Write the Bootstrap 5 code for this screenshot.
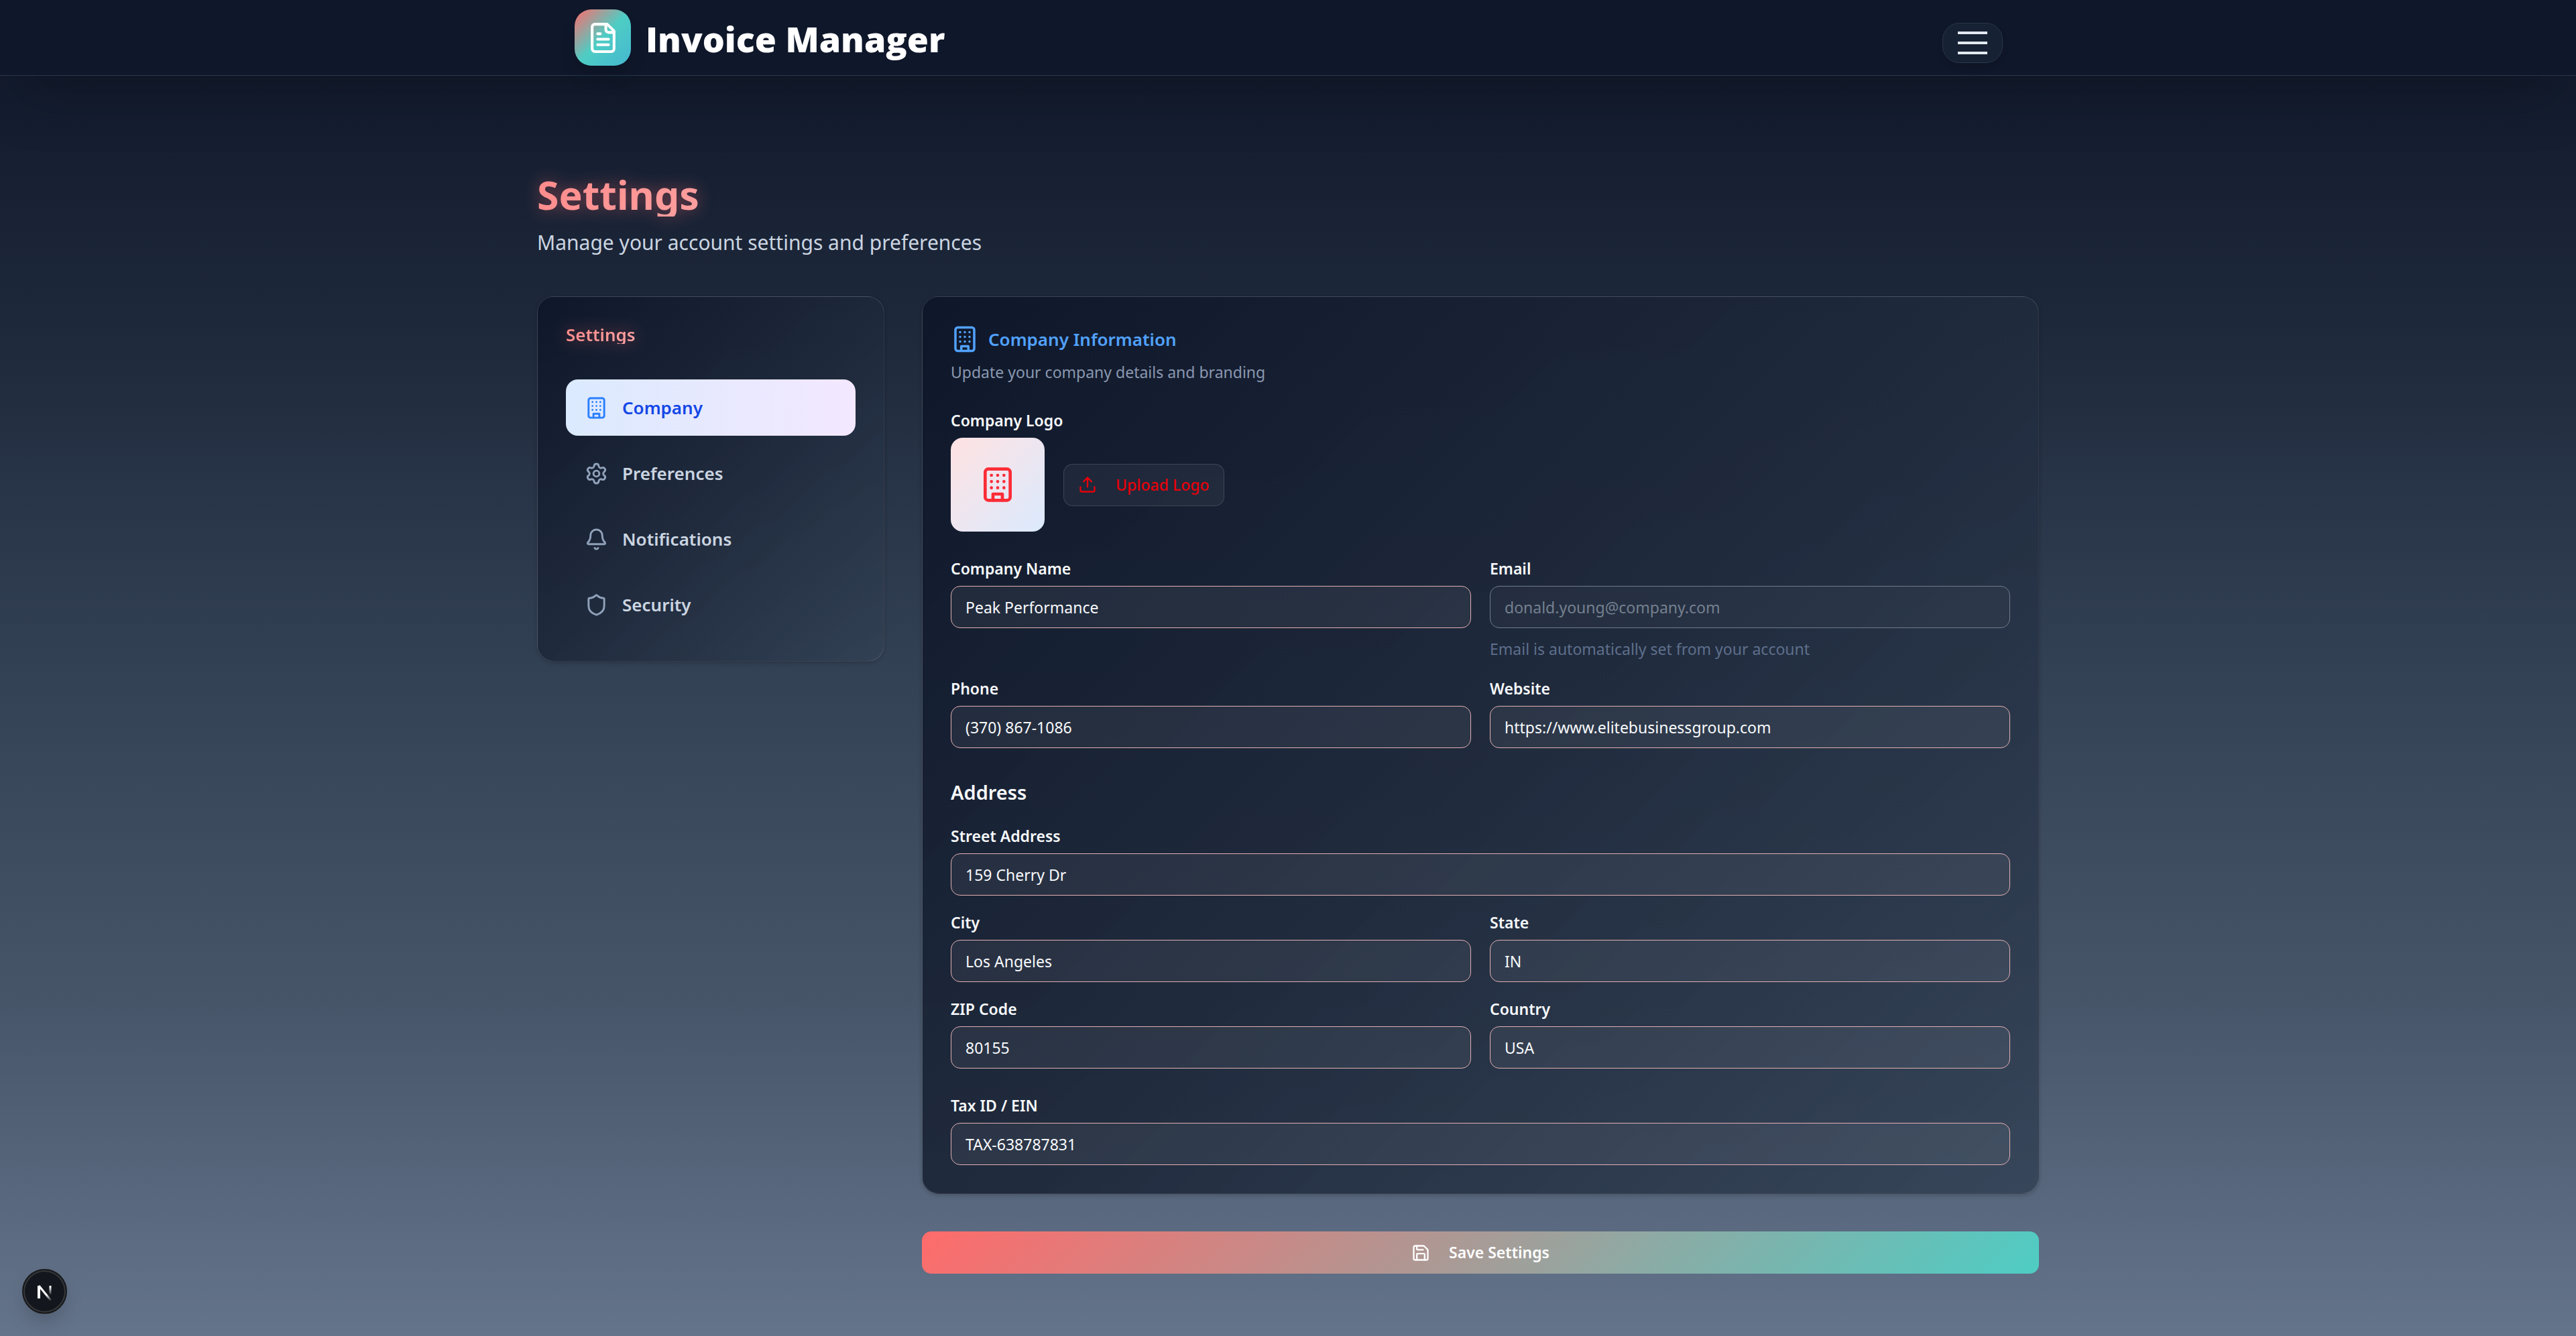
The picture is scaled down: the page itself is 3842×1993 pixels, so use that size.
<!DOCTYPE html>
<html lang="en">
<head>
<meta charset="utf-8">
<meta name="viewport" content="width=device-width, initial-scale=1">
<title>Invoice Manager – Settings</title>
<link href="https://cdn.jsdelivr.net/npm/bootstrap@5.3.0/dist/css/bootstrap.min.css" rel="stylesheet">
<style>
  :root { --page: 2240px; }
  body {
    min-height: 100vh;
    font-family: "Noto Sans", "Open Sans", sans-serif;
    font-size: 23px;
    line-height: 35px;
    color: #f8fafc;
    background: linear-gradient(180deg, #0f172a 0%, #1e293b 25%, #334155 50%, #475569 75%, #64748b 100%) no-repeat;
  }
  svg { display: block; flex: none; fill: none; stroke: currentColor; stroke-width: 2; stroke-linecap: round; stroke-linejoin: round; }
  .ico-sm { width: 28px; height: 28px; }
  .ico-md { width: 35px; height: 35px; }
  .ico-lg { width: 42px; height: 42px; }
  .ico-doc { width: 49px; height: 49px; }
  .ico-xl { width: 56px; height: 56px; }

  .topbar {
    height: 113px;
    background: #0f172a;
    border-bottom: 1px solid #28374f;
    box-shadow: 0 44px 88px -21px rgba(0, 0, 0, .25);
  }
  .page-wrap { width: 100%; max-width: var(--page); margin: 0 auto; }
  .topbar .page-wrap { padding: 0 54px 0 56px; }
  .brand { gap: 22px; color: #fff; font-family: "Open Sans", "Noto Sans", sans-serif; font-size: 52px; font-weight: 800; line-height: 56px; }
  .brand-text { padding-top: 4px; }
  .brand-logo {
    width: 84px; height: 84px; border-radius: 25px; color: #fff;
    background: linear-gradient(135deg, #ff6b6b 0%, #4ecdc4 50%, #45b7d1 100%);
    box-shadow: 0 18px 26px -5px rgba(0, 0, 0, .15);
  }
  .menu-btn {
    width: 90px; height: 60px; margin-top: 16px; padding: 0; border-radius: 25px;
    background: #162133; border: 1px solid #29364a; color: #e2e8f0;
    box-shadow: 0 7px 10px rgba(0, 0, 0, .1);
  }
  .menu-btn svg { width: 44px; height: 34px; stroke-width: 4; stroke-linecap: butt; }

  .page-wrap.settings { padding: 140px 0 90px; }
  .glow {
    background: linear-gradient(135deg, #ff8a8a, #ffb0b0);
    -webkit-background-clip: text; background-clip: text; color: transparent;
    filter: drop-shadow(0 0 12px rgba(255, 107, 107, .45));
  }
  .page-title { padding-top: 4px; font-size: 59px; line-height: 66px; font-weight: 700; background-size: 480px 100%; }
  .page-sub { margin: 14px 0 0; font-size: 30px; line-height: 49px; color: #cbd5e1; }
  .grid-main { --bs-gutter-x: 56px; margin-top: 56px; }

  .panel {
    border: 1px solid rgba(255, 255, 255, .13);
    border-radius: 25px; padding: 42px;
    background: linear-gradient(135deg, rgba(15, 23, 42, .98) 0%, rgba(30, 41, 59, .95) 50%, rgba(51, 65, 85, .85) 100%);
    box-shadow: 0 2px 6px rgba(0, 0, 0, .2);
  }
  .side-title { font-size: 26px; line-height: 28px; font-weight: 600; margin: 0 0 53px; background-size: 180px 100%; }
  .side-nav { gap: 14px; }
  .side-nav .nav-link {
    display: flex; align-items: center; gap: 21px; width: 100%; height: 84px; padding: 0 28px;
    border: 0; border-radius: 18px; background: transparent;
    color: #cbd5e1; font-size: 26px; font-weight: 600; text-align: left;
  }
  .side-nav .nav-link svg { color: #90a1b9; }
  .side-nav .nav-link.active { color: #1447e6; background: linear-gradient(90deg, #dbeafe, #f3e8ff); }
  .side-nav .nav-link.active svg { color: #2b7fff; }

  .card-head { gap: 14px; color: #51a2ff; font-size: 26px; line-height: 42px; font-weight: 600; margin: 0; }
  .card-desc { margin: 12px 0 0; line-height: 33px; color: #8a98b0; }
  .block { margin-top: 42px; }
  .field-label { display: block; margin: 0 0 12px; line-height: 27px; font-weight: 600; color: #f8fafc; }
  .logo-row { gap: 28px; }
  .logo-box { width: 140px; height: 140px; border-radius: 18px; color: #fb2c36; background: linear-gradient(135deg, #ffe2e2, #dbeafe); }
  .upload {
    height: 63px; padding: 0 21px; gap: 28px; border-radius: 14px; font-weight: 500;
    color: #e7000b; background: rgba(255, 255, 255, .05); border: 1px solid rgba(255, 255, 255, .13);
  }
  .field {
    height: 63px; padding: 0 21px; border-radius: 14px; font-size: 23px; line-height: 35px;
    color: #f8fafc; background: rgba(255, 255, 255, .06); border: 1px solid #e0afb1;
  }
  .field:focus { color: #f8fafc; background: rgba(255, 255, 255, .1); }
  .field:disabled { color: #75808f; background: rgba(255, 255, 255, .03); border-color: #6f7b8b; opacity: 1; }
  .hint { margin: 14px 0 0; color: #5f6f8b; }
  .fields { --bs-gutter-x: 28px; row-gap: 28px; }
  .fields-tight { row-gap: 27px; }
  .sub-title { font-size: 29px; line-height: 48px; font-weight: 600; margin: 0 0 28px; }
  .save {
    height: 63px; margin-top: 56px; gap: 28px; border: 0; border-radius: 14px;
    font-weight: 600; color: #fff;
    background: linear-gradient(135deg, #ff6b6b, #4ecdc4);
  }
  .dev-badge {
    position: fixed; left: 33px; bottom: 33px; width: 67px; height: 67px; padding: 0; border-radius: 50%;
    background: #13171d; border: 2px solid #191a1b; box-shadow: inset 0 0 0 2px #37393c, 0 16px 32px -8px rgba(0, 0, 0, .24);
  }
  .dev-badge svg { width: 28px; height: 28px; }
</style>
</head>
<body>
<svg width="0" height="0" class="position-absolute" aria-hidden="true">
  <symbol id="i-building" viewBox="0 0 24 24">
    <rect x="4" y="2" width="16" height="20" rx="2" ry="2"/>
    <path d="M9 22v-4h6v4M8 6h.01M16 6h.01M12 6h.01M12 10h.01M12 14h.01M16 10h.01M16 14h.01M8 10h.01M8 14h.01"/>
  </symbol>
</svg>

<header class="topbar">
  <div class="page-wrap d-flex align-items-center justify-content-between h-100">
    <a href="#" class="brand d-flex align-items-center text-decoration-none">
      <span class="brand-logo d-flex align-items-center justify-content-center">
        <svg class="ico-doc" viewBox="0 0 24 24"><path d="M15 2H6a2 2 0 0 0-2 2v16a2 2 0 0 0 2 2h12a2 2 0 0 0 2-2V7Z"/><path d="M14 2v4a2 2 0 0 0 2 2h4M10 9H8M16 13H8M16 17H8"/></svg>
      </span>
      <span class="brand-text">Invoice Manager</span>
    </a>
    <button type="button" class="menu-btn d-flex align-items-center justify-content-center" aria-label="Open menu">
      <svg viewBox="0 0 44 34"><path d="M0 2h44M0 17h44M0 32h44"/></svg>
    </button>
  </div>
</header>

<main class="page-wrap settings">
  <h1 class="page-title glow mb-0">Settings</h1>
  <p class="page-sub">Manage your account settings and preferences</p>

  <div class="row grid-main align-items-start">
    <div class="col-3">
      <aside class="panel">
        <h2 class="side-title glow">Settings</h2>
        <nav class="side-nav nav flex-column">
          <button type="button" class="nav-link active"><svg class="ico-md"><use href="#i-building"/></svg>Company</button>
          <button type="button" class="nav-link"><svg class="ico-md" viewBox="0 0 24 24"><path d="M9.671 4.136a2.34 2.34 0 0 1 4.659 0 2.34 2.34 0 0 0 3.319 1.915 2.34 2.34 0 0 1 2.33 4.033 2.34 2.34 0 0 0 0 3.831 2.34 2.34 0 0 1-2.33 4.033 2.34 2.34 0 0 0-3.319 1.915 2.34 2.34 0 0 1-4.659 0 2.34 2.34 0 0 0-3.32-1.915 2.34 2.34 0 0 1-2.33-4.033 2.34 2.34 0 0 0 0-3.831A2.34 2.34 0 0 1 6.35 6.051a2.34 2.34 0 0 0 3.319-1.915"/><circle cx="12" cy="12" r="3"/></svg>Preferences</button>
          <button type="button" class="nav-link"><svg class="ico-md" viewBox="0 0 24 24"><path d="M10.268 21a2 2 0 0 0 3.464 0"/><path d="M3.262 15.326A1 1 0 0 0 4 17h16a1 1 0 0 0 .74-1.673C19.41 13.956 18 12.499 18 8A6 6 0 0 0 6 8c0 4.499-1.411 5.956-2.738 7.326"/></svg>Notifications</button>
          <button type="button" class="nav-link"><svg class="ico-md" viewBox="0 0 24 24"><path d="M20 13c0 5-3.5 7.5-7.66 8.95a1 1 0 0 1-.67-.01C7.5 20.5 4 18 4 13V6a1 1 0 0 1 1-1c2 0 4.5-1.2 6.24-2.72a1.17 1.17 0 0 1 1.52 0C14.51 3.81 17 5 19 5a1 1 0 0 1 1 1z"/></svg>Security</button>
        </nav>
      </aside>
    </div>

    <div class="col-9">
      <form>
        <section class="panel">
          <h2 class="card-head d-flex align-items-center"><svg class="ico-lg"><use href="#i-building"/></svg>Company Information</h2>
          <p class="card-desc">Update your company details and branding</p>

          <div class="block">
            <label class="field-label" for="logo">Company Logo</label>
            <div class="logo-row d-flex align-items-center">
              <div class="logo-box d-flex align-items-center justify-content-center"><svg class="ico-xl"><use href="#i-building"/></svg></div>
              <button type="button" id="logo" class="upload d-flex align-items-center">
                <svg class="ico-sm" viewBox="0 0 24 24"><path d="M12 3v12M17 8l-5-5-5 5M21 15v4a2 2 0 0 1-2 2H5a2 2 0 0 1-2-2v-4"/></svg>Upload Logo
              </button>
            </div>
          </div>

          <div class="block">
            <div class="row fields">
              <div class="col-6"><label class="field-label" for="name">Company Name</label><input id="name" type="text" class="form-control field" value="Peak Performance"></div>
              <div class="col-6"><label class="field-label" for="email">Email</label><input id="email" type="email" class="form-control field" value="donald.young@company.com" disabled>
                <p class="hint">Email is automatically set from your account</p></div>
              <div class="col-6"><label class="field-label" for="phone">Phone</label><input id="phone" type="tel" class="form-control field" value="(370) 867-1086"></div>
              <div class="col-6"><label class="field-label" for="site">Website</label><input id="site" type="url" class="form-control field" value="https://www.elitebusinessgroup.com"></div>
            </div>
          </div>

          <div class="block">
            <h3 class="sub-title">Address</h3>
            <div class="row fields fields-tight">
              <div class="col-12"><label class="field-label" for="street">Street Address</label><input id="street" type="text" class="form-control field" value="159 Cherry Dr"></div>
              <div class="col-6"><label class="field-label" for="city">City</label><input id="city" type="text" class="form-control field" value="Los Angeles"></div>
              <div class="col-6"><label class="field-label" for="state">State</label><input id="state" type="text" class="form-control field" value="IN"></div>
              <div class="col-6"><label class="field-label" for="zip">ZIP Code</label><input id="zip" type="text" class="form-control field" value="80155"></div>
              <div class="col-6"><label class="field-label" for="country">Country</label><input id="country" type="text" class="form-control field" value="USA"></div>
            </div>
          </div>

          <div class="block">
            <label class="field-label" for="tax">Tax ID / EIN</label>
            <input id="tax" type="text" class="form-control field" value="TAX-638787831">
          </div>
        </section>

        <button type="submit" class="save w-100 d-flex align-items-center justify-content-center">
          <svg class="ico-sm" viewBox="0 0 24 24"><path d="M15.2 3a2 2 0 0 1 1.4.6l3.8 3.8a2 2 0 0 1 .6 1.4V19a2 2 0 0 1-2 2H5a2 2 0 0 1-2-2V5a2 2 0 0 1 2-2z"/><path d="M17 21v-7a1 1 0 0 0-1-1H8a1 1 0 0 0-1 1v7M7 3v4a1 1 0 0 0 1 1h7"/></svg>Save Settings
        </button>
      </form>
    </div>
  </div>
</main>

<button type="button" class="dev-badge d-flex align-items-center justify-content-center" aria-label="Developer tools">
  <svg viewBox="0 0 28 28">
    <defs>
      <linearGradient id="g1" gradientUnits="userSpaceOnUse" x1="14" y1="14" x2="24" y2="27"><stop offset="0.3" stop-color="#fff"/><stop offset="1" stop-color="#fff" stop-opacity="0"/></linearGradient>
      <linearGradient id="g2" gradientUnits="userSpaceOnUse" x1="22" y1="4" x2="22" y2="19"><stop offset="0.2" stop-color="#fff"/><stop offset="1" stop-color="#fff" stop-opacity="0"/></linearGradient>
    </defs>
    <path d="M5 24V5" stroke="#fff" stroke-width="4" stroke-linecap="butt"/>
    <path d="M5 5L23 27" stroke="url(#g1)" stroke-width="3" stroke-linecap="butt"/>
    <path d="M22 5V19" stroke="url(#g2)" stroke-width="3" stroke-linecap="butt"/>
  </svg>
</button>
<script src="https://cdn.jsdelivr.net/npm/bootstrap@5.3.0/dist/js/bootstrap.bundle.min.js"></script>
</body>
</html>
